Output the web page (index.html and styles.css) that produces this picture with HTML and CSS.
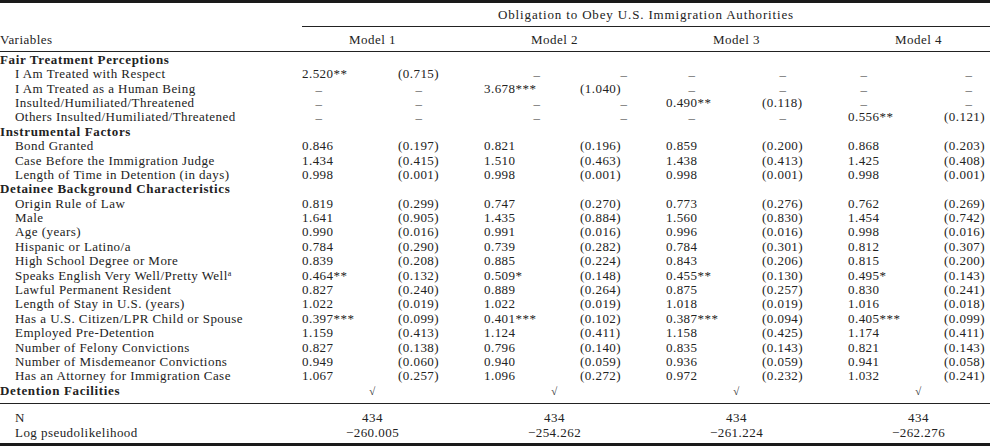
FILE: index.html
```html
<!DOCTYPE html>
<html>
<head>
<meta charset="utf-8">
<link rel="stylesheet" href="styles.css">
</head>
<body>
<div class="table">
  <div class="row head1">
    <div class="lab"></div>
    <div class="span-all">Obligation to Obey U.S. Immigration Authorities</div>
  </div>
  <div class="row head2">
    <div class="lab top">Variables</div>
    <div class="grp"><span>Model 1</span></div>
    <div class="grp"><span>Model 2</span></div>
    <div class="grp"><span>Model 3</span></div>
    <div class="grp last"><span>Model 4</span></div>
  </div>
  <div class="body">
    <div class="row"><div class="sec">Fair Treatment Perceptions</div></div>
    <div class="row"><div class="lab">I Am Treated with Respect</div><div class="c1">2.520**</div><div class="s1">(0.715)</div><div class="c2"><span class="dash">–</span></div><div class="s2"><span class="dash">–</span></div><div class="c3"><span class="dash">–</span></div><div class="s3"><span class="dash">–</span></div><div class="c4"><span class="dash">–</span></div><div class="s4"><span class="dash">–</span></div></div>
    <div class="row"><div class="lab">I Am Treated as a Human Being</div><div class="c1"><span class="dash">–</span></div><div class="s1"><span class="dash">–</span></div><div class="c2">3.678***</div><div class="s2">(1.040)</div><div class="c3"><span class="dash">–</span></div><div class="s3"><span class="dash">–</span></div><div class="c4"><span class="dash">–</span></div><div class="s4"><span class="dash">–</span></div></div>
    <div class="row"><div class="lab">Insulted/Humiliated/Threatened</div><div class="c1"><span class="dash">–</span></div><div class="s1"><span class="dash">–</span></div><div class="c2"><span class="dash">–</span></div><div class="s2"><span class="dash">–</span></div><div class="c3">0.490**</div><div class="s3">(0.118)</div><div class="c4"><span class="dash">–</span></div><div class="s4"><span class="dash">–</span></div></div>
    <div class="row"><div class="lab">Others Insulted/Humiliated/Threatened</div><div class="c1"><span class="dash">–</span></div><div class="s1"><span class="dash">–</span></div><div class="c2"><span class="dash">–</span></div><div class="s2"><span class="dash">–</span></div><div class="c3"><span class="dash">–</span></div><div class="s3"><span class="dash">–</span></div><div class="c4">0.556**</div><div class="s4">(0.121)</div></div>
    <div class="row"><div class="sec">Instrumental Factors</div></div>
    <div class="row"><div class="lab">Bond Granted</div><div>0.846</div><div>(0.197)</div><div>0.821</div><div>(0.196)</div><div>0.859</div><div>(0.200)</div><div>0.868</div><div>(0.203)</div></div>
    <div class="row"><div class="lab">Case Before the Immigration Judge</div><div>1.434</div><div>(0.415)</div><div>1.510</div><div>(0.463)</div><div>1.438</div><div>(0.413)</div><div>1.425</div><div>(0.408)</div></div>
    <div class="row"><div class="lab">Length of Time in Detention (in days)</div><div>0.998</div><div>(0.001)</div><div>0.998</div><div>(0.001)</div><div>0.998</div><div>(0.001)</div><div>0.998</div><div>(0.001)</div></div>
    <div class="row"><div class="sec">Detainee Background Characteristics</div></div>
    <div class="row"><div class="lab">Origin Rule of Law</div><div>0.819</div><div>(0.299)</div><div>0.747</div><div>(0.270)</div><div>0.773</div><div>(0.276)</div><div>0.762</div><div>(0.269)</div></div>
    <div class="row"><div class="lab">Male</div><div>1.641</div><div>(0.905)</div><div>1.435</div><div>(0.884)</div><div>1.560</div><div>(0.830)</div><div>1.454</div><div>(0.742)</div></div>
    <div class="row"><div class="lab">Age (years)</div><div>0.990</div><div>(0.016)</div><div>0.991</div><div>(0.016)</div><div>0.996</div><div>(0.016)</div><div>0.998</div><div>(0.016)</div></div>
    <div class="row"><div class="lab">Hispanic or Latino/a</div><div>0.784</div><div>(0.290)</div><div>0.739</div><div>(0.282)</div><div>0.784</div><div>(0.301)</div><div>0.812</div><div>(0.307)</div></div>
    <div class="row"><div class="lab">High School Degree or More</div><div>0.839</div><div>(0.208)</div><div>0.885</div><div>(0.224)</div><div>0.843</div><div>(0.206)</div><div>0.815</div><div>(0.200)</div></div>
    <div class="row"><div class="lab">Speaks English Very Well/Pretty Well<sup>a</sup></div><div>0.464**</div><div>(0.132)</div><div>0.509*</div><div>(0.148)</div><div>0.455**</div><div>(0.130)</div><div>0.495*</div><div>(0.143)</div></div>
    <div class="row"><div class="lab">Lawful Permanent Resident</div><div>0.827</div><div>(0.240)</div><div>0.889</div><div>(0.264)</div><div>0.875</div><div>(0.257)</div><div>0.830</div><div>(0.241)</div></div>
    <div class="row"><div class="lab">Length of Stay in U.S. (years)</div><div>1.022</div><div>(0.019)</div><div>1.022</div><div>(0.019)</div><div>1.018</div><div>(0.019)</div><div>1.016</div><div>(0.018)</div></div>
    <div class="row"><div class="lab">Has a U.S. Citizen/LPR Child or Spouse</div><div>0.397***</div><div>(0.099)</div><div>0.401***</div><div>(0.102)</div><div>0.387***</div><div>(0.094)</div><div>0.405***</div><div>(0.099)</div></div>
    <div class="row"><div class="lab">Employed Pre-Detention</div><div>1.159</div><div>(0.413)</div><div>1.124</div><div>(0.411)</div><div>1.158</div><div>(0.425)</div><div>1.174</div><div>(0.411)</div></div>
    <div class="row"><div class="lab">Number of Felony Convictions</div><div>0.827</div><div>(0.138)</div><div>0.796</div><div>(0.140)</div><div>0.835</div><div>(0.143)</div><div>0.821</div><div>(0.143)</div></div>
    <div class="row"><div class="lab">Number of Misdemeanor Convictions</div><div>0.949</div><div>(0.060)</div><div>0.940</div><div>(0.059)</div><div>0.936</div><div>(0.059)</div><div>0.941</div><div>(0.058)</div></div>
    <div class="row"><div class="lab">Has an Attorney for Immigration Case</div><div>1.067</div><div>(0.257)</div><div>1.096</div><div>(0.272)</div><div>0.972</div><div>(0.232)</div><div>1.032</div><div>(0.241)</div></div>
    <div class="row"><div class="lab top bold">Detention Facilities</div><div class="grp"><span class="chk">√</span></div><div class="grp"><span class="chk">√</span></div><div class="grp"><span class="chk">√</span></div><div class="grp last"><span class="chk">√</span></div></div>
  </div>
  <div class="foot">
    <div class="row"><div class="lab">N</div><div class="grp"><span>434</span></div><div class="grp"><span>434</span></div><div class="grp"><span>434</span></div><div class="grp last"><span>434</span></div></div>
    <div class="row"><div class="lab">Log pseudolikelihood</div><div class="grp"><span>−260.005</span></div><div class="grp"><span>−254.262</span></div><div class="grp"><span>−261.224</span></div><div class="grp last"><span>−262.276</span></div></div>
  </div>
</div>
</body>
</html>
```
FILE: styles.css
```css
html, body {
  margin: 0;
  padding: 0;
  background: #ffffff;
}

body {
  font-family: "Liberation Serif", "Times New Roman", serif;
  font-size: 13px;
  letter-spacing: 0.45px;
  color: #222222;
  width: 990px;
  height: 446px;
  overflow: hidden;
}

.table {
  border-top: 3px solid #1a1a1a;
  border-bottom: 3px solid #1a1a1a;
  box-sizing: border-box;
  width: 990px;
}

.row {
  display: grid;
  grid-template-columns: 302px 96px 86px 96px 86px 96px 86px 96px 1fr;
  height: 14.4px;
  line-height: 14.4px;
  white-space: nowrap;
}

.lab {
  padding-left: 15px;
}

.lab.top {
  padding-left: 0;
}

.bold,
.sec {
  font-weight: bold;
  letter-spacing: 0.65px;
}

.sec {
  grid-column: 1 / -1;
}

.head1 {
  padding-top: 4.8px;
}

.span-all {
  grid-column: 2 / -1;
  text-align: center;
  letter-spacing: 0.85px;
  padding-bottom: 3.5px;
  border-bottom: 1px solid #222;
}

.head2 {
  height: auto;
  padding-top: 6.3px;
  padding-bottom: 3.6px;
  border-bottom: 1px solid #222;
}

.head1 {
  height: auto;
}

.grp {
  grid-column: span 2;
}

.grp span {
  display: block;
  width: 141px;
  text-align: center;
}

.grp.last {
  grid-column: 8 / -1;
}

.body {
  padding-top: 0.8px;
  padding-bottom: 5px;
  border-bottom: 1px solid #222;
}

.foot {
  padding-top: 7px;
  padding-bottom: 2.8px;
}

.dash {
  display: inline-block;
  text-align: center;
  color: #555;
  position: relative;
  top: 1px;
}

.c1 .dash { width: 34px; }
.s1 .dash { width: 42px; }
.c2 .dash { width: 106px; }
.s2 .dash { width: 88px; }
.c3 .dash { width: 52px; }
.s3 .dash { width: 42px; }
.c4 .dash { width: 32px; }
.s4 .dash { width: 50px; }

sup {
  font-size: 8px;
  line-height: 0;
  vertical-align: 4px;
}

.chk {
  font-size: 11px;
}
```
